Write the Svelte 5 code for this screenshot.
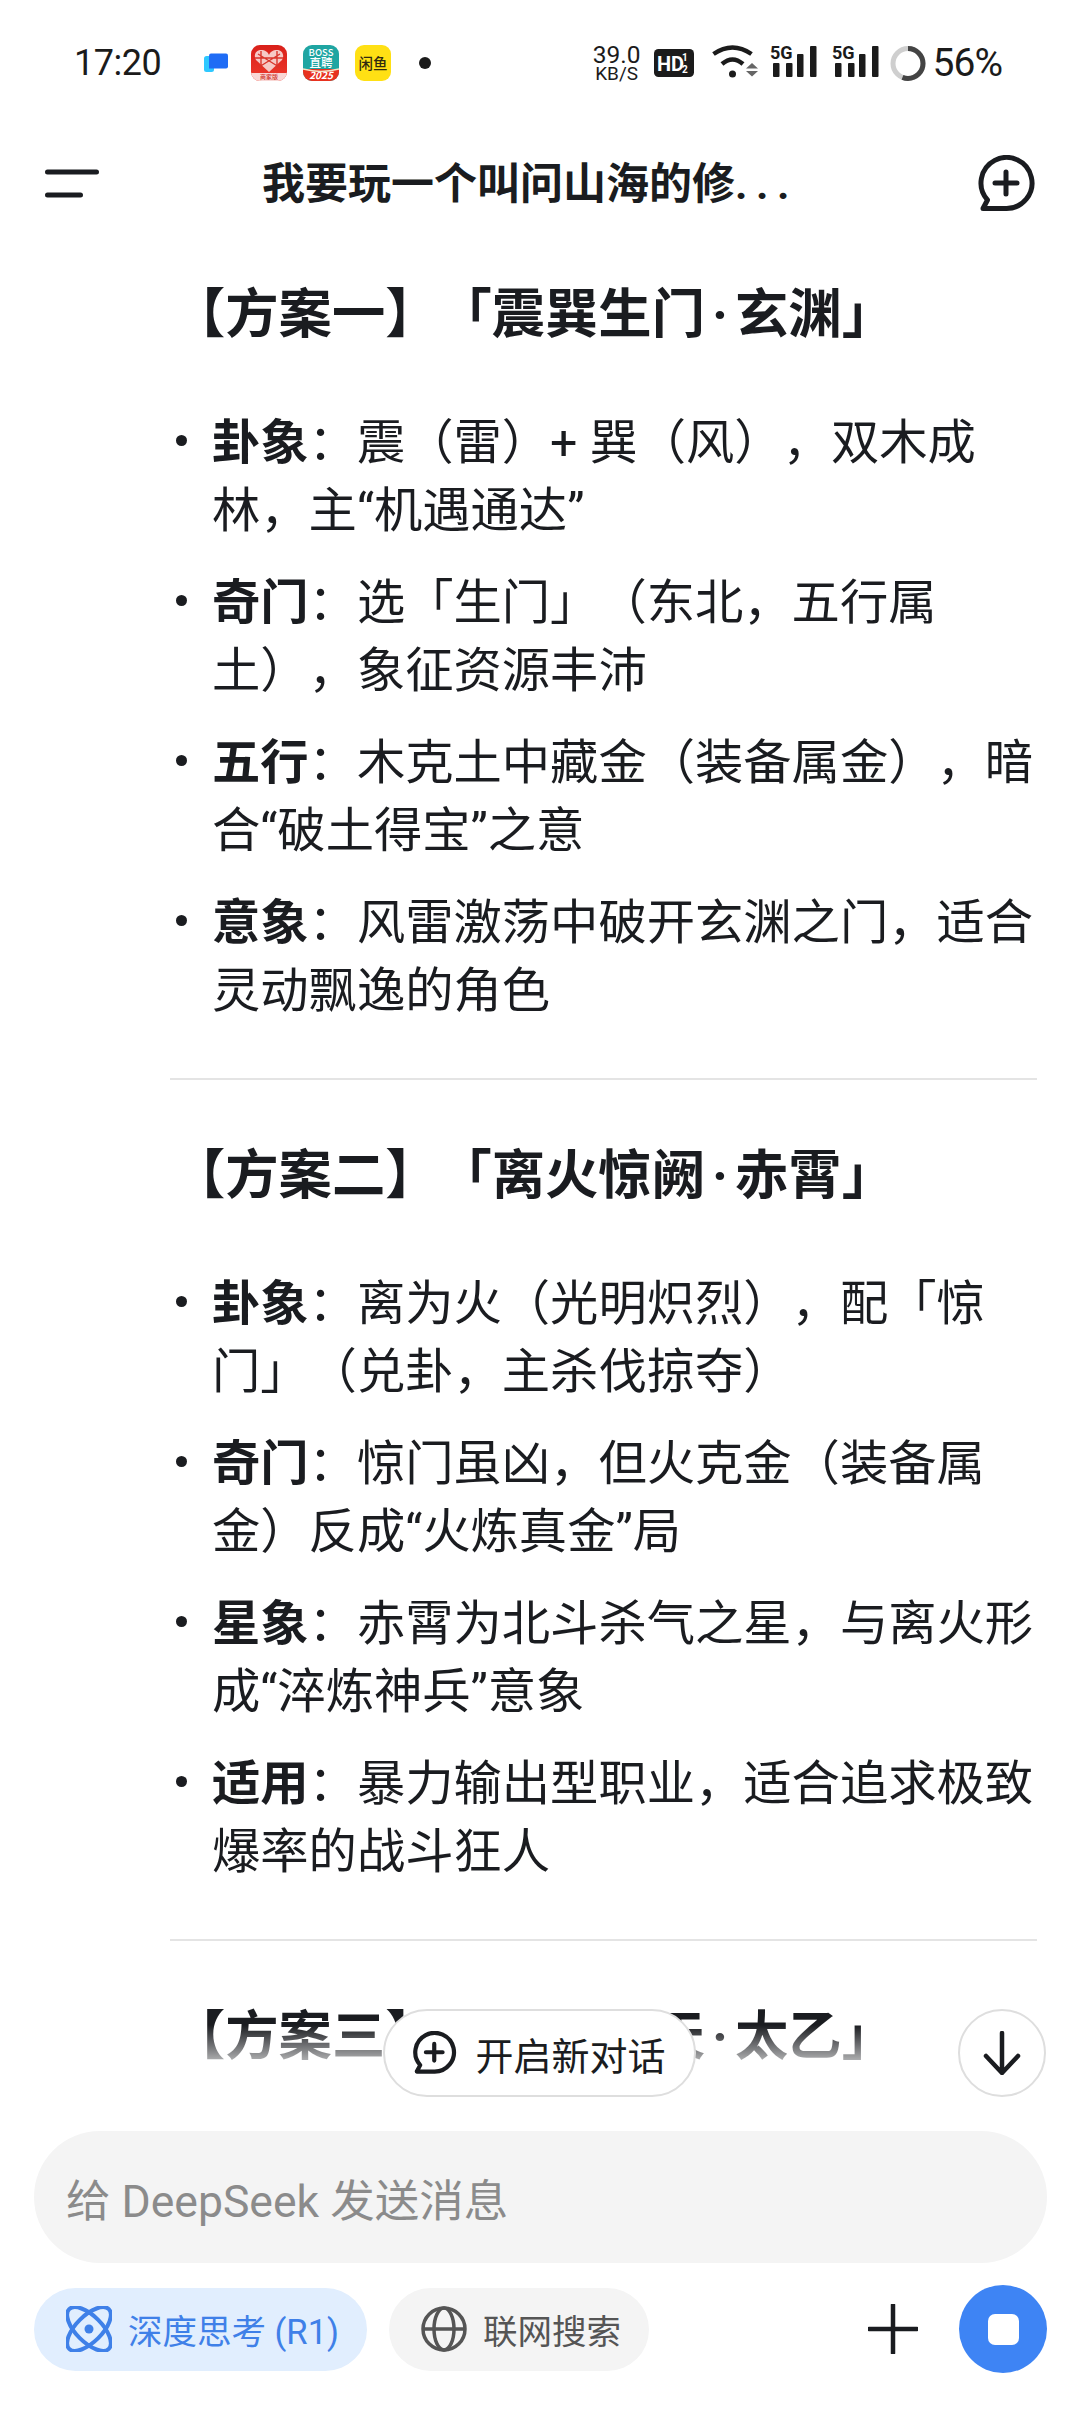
<script>
  const sections = [
    {
      title: ['【方案一】「震巽生门', '玄渊」'],
      items: [
        ['卦象', '：震（雷）+ 巽（风），双木成林，主“机遇通达”'],
        ['奇门', '：选「生门」（东北，五行属土），象征资源丰沛'],
        ['五行', '：木克土中藏金（装备属金），暗合“破土得宝”之意'],
        ['意象', '：风雷激荡中破开玄渊之门，适合灵动飘逸的角色']
      ]
    },
    {
      title: ['【方案二】「离火惊阙', '赤霄」'],
      items: [
        ['卦象', '：离为火（光明炽烈），配「惊门」（兑卦，主杀伐掠夺）'],
        ['奇门', '：惊门虽凶，但火克金（装备属金）反成“火炼真金”局'],
        ['星象', '：赤霄为北斗杀气之星，与离火形成“淬炼神兵”意象'],
        ['适用', '：暴力输出型职业，适合追求极致爆率的战斗狂人']
      ]
    }
  ];
  const barsX = [3, 16, 27, 40];
  const barsY = [19, 19, 10, 2];
</script>

<div class="page">
  <div class="status">
    <span class="time">17:20</span>
    <div class="apps">
      <svg class="app-blue" width="24" height="20" viewBox="0 0 24 20">
        <rect x="0" y="3" width="10" height="16" rx="2.5" fill="#2ec8ff" />
        <path d="M5 2.500a2 2 0 0 1 2-2h15a2 2 0 0 1 2 2v11a2 2 0 0 1-2 2H5z" fill="#1f6cf5" />
      </svg>
      <svg width="36" height="36" viewBox="0 0 36 36">
        <defs>
          <linearGradient id="pdd" x1="0" y1="0" x2="0" y2="1">
            <stop offset="0" stop-color="#d9201a" />
            <stop offset="1" stop-color="#ee3a2c" />
          </linearGradient>
        </defs>
        <rect width="36" height="36" rx="9" fill="url(#pdd)" />
        <path d="M0 28h36v-1a9 9 0 0 1-9 9H9a9 9 0 0 1-9-9z" fill="#f9d7d5" />
        <path d="M18 27 5 15c-3-5 0-10 5-10 4 0 7 2 8 5 1-3 4-5 8-5 5 0 8 5 5 10z" fill="#f6c9c5" />
        <path d="M10 6v17M26 6v17M4 13h28M7 9l21 13M29 9 8 22" stroke="#d9352b" stroke-width="1.4" />
        <text x="18" y="34" class="tiny" font-size="6" fill="#d0342b">商家版</text>
      </svg>
      <svg width="36" height="36" viewBox="0 0 36 36">
        <rect width="36" height="36" rx="9" fill="#1fa5a2" />
        <path d="M0 24h36v3a9 9 0 0 1-9 9H9a9 9 0 0 1-9-9z" fill="#e8321f" />
        <path d="M0 24q18 5 36 0" stroke="#f2e6c8" stroke-width="1.4" fill="none" />
        <text x="18" y="10.5" class="tiny" font-size="9.5" fill="#fff">BOSS</text>
        <text x="18" y="22" class="tiny" font-size="11.5" fill="#fff">直聘</text>
        <text x="18" y="34" class="tiny italic" font-size="10" fill="#fff">2025</text>
      </svg>
      <svg width="36" height="36" viewBox="0 0 36 36">
        <rect width="36" height="36" rx="9" fill="#ffe014" />
        <text x="18" y="24" class="tiny" font-size="14.5" font-weight="700" fill="#2f2a10">闲鱼</text>
      </svg>
      <i class="dot"></i>
    </div>
    <div class="sys">
      <div class="speed"><span>39.0</span><small>KB/S</small></div>
      <svg class="hd" width="40" height="28" viewBox="0 0 40 28">
        <rect width="40" height="28" rx="4.500" fill="#1b1b1b" />
        <text x="3" y="21.5" class="cond" font-size="20" fill="#fff">HD</text>
        <text x="28" y="12" class="cond" font-size="10" fill="#fff">1</text>
        <text x="28" y="24" class="cond" font-size="10" fill="#fff">2</text>
      </svg>
      <svg class="wifi" width="47" height="34" viewBox="0 0 47 34">
        <path d="M1.500 10Q20.500-3 39.500 10" fill="none" stroke="#1b1b1b" stroke-width="4.500" />
        <path d="M10 20Q20.500 11 31 20" fill="none" stroke="#1b1b1b" stroke-width="4.500" />
        <circle cx="20.500" cy="30" r="3.500" fill="#1b1b1b" />
        <path d="M34 24.500 40 19l6 5.500zM34 27h12l-6 5.500z" fill="#666" />
      </svg>
      {#each [0, 1] as n}
        <svg class="sig" width="47" height="38" viewBox="0 -4 47 38" class:second={n === 1}>
          <text x="0" y="15" class="cond" font-size="18" fill="#1b1b1b">5G</text>
          {#each barsX as x, i}
            <rect {x} y={barsY[i]} width="6.500" height={33 - barsY[i]} rx="1" fill="#1b1b1b" />
          {/each}
        </svg>
      {/each}
      <svg class="ring" width="36" height="37" viewBox="0 0 36 37">
        <circle cx="18" cy="18.500" r="15" fill="none" stroke="#cfcfcf" stroke-width="5" />
        <circle cx="18" cy="18.500" r="15" fill="none" stroke="#444" stroke-width="5" pathLength="100" stroke-dasharray="56 44" transform="rotate(-90 18 18.500)" />
      </svg>
      <span class="batt">56%</span>
    </div>
  </div>

  <header class="bar">
    <svg width="54" height="30" viewBox="0 0 54 30">
      <path d="M2.500 3h49M2.500 26h33" stroke="#1a1c20" stroke-width="5" stroke-linecap="round" />
    </svg>
    <h1>我要玩一个叫问山海的修<span class="dots">...</span></h1>
    <svg width="58" height="58" viewBox="0 0 58 58">
      <path d="M5 53.500 9.500 45A25.500 25.500 0 1 1 28 53.500Z" fill="none" stroke="#1a1c20" stroke-width="5" stroke-linejoin="round" />
      <path d="M28 17v22M17 28h22" stroke="#1a1c20" stroke-width="5" stroke-linecap="round" />
    </svg>
  </header>

  <main class="chat">
    <div class="scroll">
      {#each sections as s}
        <h3>{s.title[0]}<span class="mid">·</span>{s.title[1]}</h3>
        <ul>
          {#each s.items as it}
            <li><i class="bullet"></i><p><strong>{it[0]}</strong>{it[1]}</p></li>
          {/each}
        </ul>
        <hr />
      {/each}
      <h3>【方案三】「乾坤通天<span class="mid">·</span>太乙」</h3>
    </div>
    <div class="fade"></div>
    <button class="newchat">
      <svg width="44" height="44" viewBox="0 0 58 58">
        <path d="M5 53.500 9.500 45A25.500 25.500 0 1 1 28 53.500Z" fill="none" stroke="#1a1c20" stroke-width="5.500" stroke-linejoin="round" />
        <path d="M28 17v22M17 28h22" stroke="#1a1c20" stroke-width="5.500" stroke-linecap="round" />
      </svg>
      开启新对话
    </button>
    <button class="down" aria-label="滚动到底部">
      <svg width="38" height="44" viewBox="0 0 38 44">
        <path d="M19 2v39M3 25l16 17 16-17" fill="none" stroke="#1a1c20" stroke-width="4.500" stroke-linecap="round" stroke-linejoin="round" />
      </svg>
    </button>
  </main>

  <footer class="composer">
    <div class="input">给 DeepSeek 发送消息</div>
    <div class="tools">
      <div class="chip on">
        <svg width="46" height="46" viewBox="0 0 46 46">
          <g fill="none" stroke="#3f80e8" stroke-width="4">
            <ellipse cx="23" cy="23" rx="28" ry="13" transform="rotate(45 23 23)" />
            <ellipse cx="23" cy="23" rx="28" ry="13" transform="rotate(-45 23 23)" />
          </g>
          <circle cx="23" cy="23" r="4.500" fill="#3f80e8" />
        </svg>
        <span>深度思考 (R1)</span>
      </div>
      <div class="chip">
        <svg width="46" height="46" viewBox="0 0 46 46">
          <g fill="none" stroke="#555" stroke-width="3.500">
            <circle cx="23" cy="23" r="21" />
            <ellipse cx="23" cy="23" rx="10" ry="21" />
            <path d="M2 23h42" />
          </g>
        </svg>
        <span>联网搜索</span>
      </div>
      <svg class="plus" width="50" height="50" viewBox="0 0 50 50">
        <path d="M25 1v48M1 25h48" stroke="#1a1c20" stroke-width="4.500" stroke-linecap="round" />
      </svg>
      <button class="stop" aria-label="停止"><i></i></button>
    </div>
  </footer>
</div>

<style>
  :global(body) {
    margin: 0;
    background: #fff;
  }
  .page {
    width: 1080px;
    height: 2412px;
    display: flex;
    flex-direction: column;
    overflow: hidden;
    background: #fff;
    color: #1a1c20;
    font-family: Roboto, "Noto Sans CJK SC", sans-serif;
    text-spacing-trim: space-all;
  }
  .status {
    height: 126px;
    flex: none;
    display: flex;
    align-items: center;
    padding: 0 78px 0 74px;
    box-sizing: border-box;
  }
  .time {
    width: 85px;
    font-size: 36px;
    letter-spacing: -0.5px;
    color: #1b1b1b;
  }
  .apps {
    display: flex;
    align-items: center;
    gap: 16px;
    margin-left: 45px;
  }
  .app-blue {
    margin-right: 7px;
  }
  .dot {
    width: 12px;
    height: 12px;
    margin-left: 12px;
    border-radius: 50%;
    background: #1b1b1b;
  }
  .tiny {
    font-family: "Noto Sans CJK SC", sans-serif;
    text-anchor: middle;
    font-weight: 500;
  }
  .italic {
    font-style: italic;
    font-weight: 700;
  }
  .cond {
    font-family: Roboto, sans-serif;
    font-weight: 700;
  }
  .sys {
    margin-left: auto;
    display: flex;
    align-items: center;
  }
  .speed {
    width: 48px;
    display: flex;
    flex-direction: column;
    align-items: center;
    line-height: 20px;
    font-size: 24.500px;
    color: #1b1b1b;
  }
  .speed small {
    font-size: 19px;
    line-height: 17px;
  }
  .hd {
    margin-left: 13px;
  }
  .wifi {
    margin-left: 18px;
    margin-bottom: 4px;
  }
  .sig {
    margin-left: 11px;
    margin-bottom: 8px;
  }
  .sig.second {
    margin-left: 15px;
  }
  .ring {
    margin-left: 11px;
  }
  .batt {
    margin-left: 7px;
    font-size: 39px;
    letter-spacing: -1px;
    color: #1b1b1b;
  }
  .bar {
    height: 116px;
    flex: none;
    display: flex;
    align-items: center;
    padding: 0 44px 0 45px;
    box-sizing: border-box;
  }
  .bar h1 {
    flex: 1;
    margin: 0;
    padding-left: 163px;
    font-size: 43px;
    font-weight: 700;
    line-height: 60px;
    white-space: nowrap;
  }
  .dots {
    letter-spacing: 8.500px;
  }
  .chat {
    flex: 1;
    min-height: 0;
    position: relative;
    overflow: hidden;
  }
  .scroll {
    padding: 35px 43px 0 170px;
  }
  h3 {
    margin: 0 0 0 2px;
    font-size: 53.300px;
    line-height: 76px;
    font-weight: 700;
    white-space: nowrap;
  }
  .mid {
    padding: 0 7px;
  }
  ul {
    list-style: none;
    margin: 56px 0 0;
    padding: 0;
  }
  li {
    display: flex;
    align-items: flex-start;
    margin-bottom: 24px;
  }
  li:last-child {
    margin-bottom: 0;
  }
  .bullet {
    flex: none;
    width: 11px;
    height: 11px;
    margin: 26px 25px 0 6px;
    border-radius: 50%;
    background: #1a1c20;
  }
  li p {
    margin: 0;
    flex: 1;
    font-size: 48.300px;
    line-height: 68px;
  }
  strong {
    font-weight: 700;
  }
  hr {
    margin: 53px 0 58px;
    border: 0;
    height: 2px;
    background: #e4e4e4;
  }
  .fade {
    position: absolute;
    left: 0;
    right: 0;
    bottom: 0;
    height: 106px;
    background: linear-gradient(to bottom, rgba(255, 255, 255, 0) 0, #fff 52%);
  }
  button {
    font-family: inherit;
    color: inherit;
    padding: 0;
  }
  .newchat {
    position: absolute;
    left: 383px;
    bottom: 34px;
    width: 313px;
    height: 88px;
    box-sizing: border-box;
    display: flex;
    align-items: center;
    justify-content: center;
    gap: 18px;
    border: 2.500px solid #dedede;
    border-radius: 44px;
    background: #fff;
    font-size: 38px;
  }
  .down {
    position: absolute;
    right: 34px;
    bottom: 34px;
    width: 88px;
    height: 88px;
    box-sizing: border-box;
    display: flex;
    align-items: center;
    justify-content: center;
    border: 2.500px solid #dedede;
    border-radius: 50%;
    background: #fff;
  }
  .composer {
    flex: none;
    padding: 0 33px 39px 34px;
  }
  .input {
    height: 132px;
    box-sizing: border-box;
    display: flex;
    align-items: center;
    padding-left: 32px;
    border-radius: 66px;
    background: #f4f4f4;
    color: #8b8b8b;
    font-size: 44.500px;
    white-space: pre;
  }
  .tools {
    height: 88px;
    margin-top: 22px;
    display: flex;
    align-items: center;
  }
  .chip {
    height: 83px;
    box-sizing: border-box;
    display: flex;
    align-items: center;
    gap: 16px;
    padding: 0 28px 0 32px;
    border-radius: 42px;
    background: #f4f4f4;
    color: #555;
    font-size: 34.500px;
    white-space: nowrap;
  }
  .chip + .chip {
    margin-left: 22px;
    padding-right: 28px;
  }
  .chip.on {
    background: #e1eefe;
    color: #3f80e8;
  }
  .plus {
    margin-left: auto;
  }
  .stop {
    width: 88px;
    height: 88px;
    margin-left: 41px;
    display: flex;
    align-items: center;
    justify-content: center;
    border: 0;
    border-radius: 50%;
    background: #3e84f4;
  }
  .stop i {
    width: 31px;
    height: 31px;
    border-radius: 7px;
    background: #fff;
  }
</style>
